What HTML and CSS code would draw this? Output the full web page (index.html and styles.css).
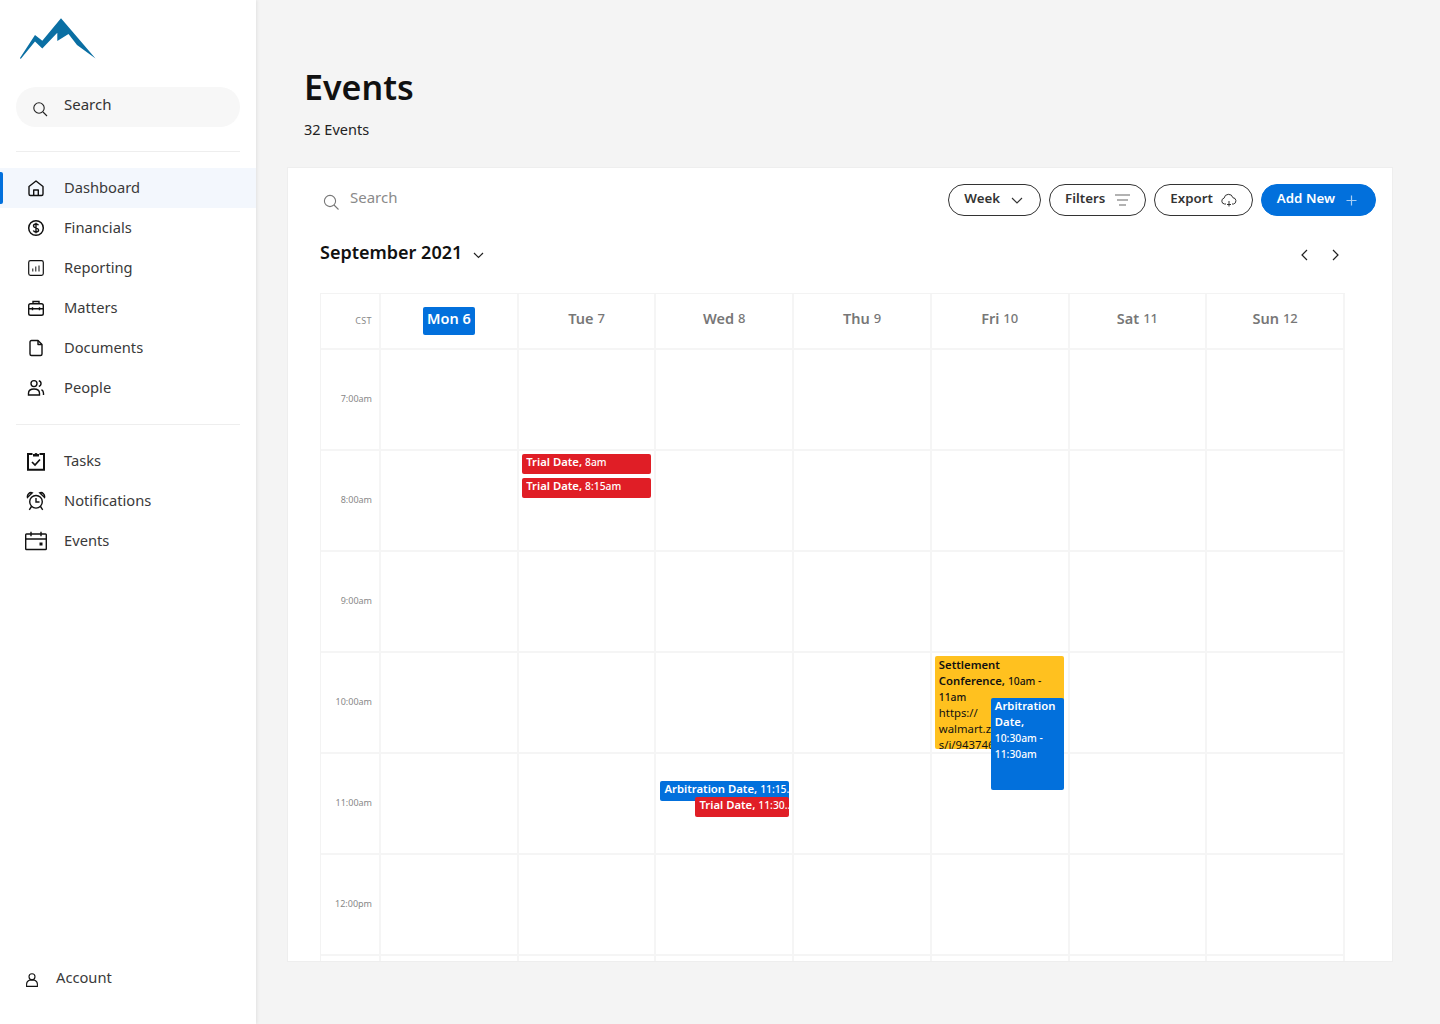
FILE: index.html
```html
<!DOCTYPE html>
<html lang="en">
<head>
  <meta charset="UTF-8">
  <title>Events</title>
  <link rel="stylesheet" href="styles.css">
</head>
<body>
  <aside class="sidebar">
    <svg class="logo" width="78" height="44" viewBox="0 0 78 44"><path fill="#0a6fa3" d="M0 40 L15 17 L22.300 22.700 L41 .3 L75.500 40.500 L57 27 L48.500 16 L37.300 23 L37.300 14.700 L22.300 30.500 L15 23.500 L.7 41 Z"/></svg>
    <div class="side-search">
      <svg width="16" height="16" viewBox="0 0 16 16" fill="none" stroke="#222" stroke-width="1.1"><circle cx="7" cy="7" r="5.200"/><path d="M11 11l4 4"/></svg>
      <span>Search</span>
    </div>
    <hr class="side-rule">
    <nav class="nav nav-main">
      <a class="nav-item active">
        <span class="nav-icon"><svg width="18" height="18" viewBox="0 0 18 18" fill="none" stroke="#111" stroke-width="1.4" stroke-linejoin="round"><path d="M2 7.500 9 2l7 5.500V15a1.500 1.500 0 0 1-1.500 1.500h-11A1.500 1.500 0 0 1 2 15Z"/><path d="M6.700 16.500V11h4.600v5.500"/></svg></span>
        Dashboard
      </a>
      <a class="nav-item">
        <span class="nav-icon"><svg width="18" height="18" viewBox="0 0 18 18" fill="none" stroke="#111" stroke-width="1.5"><circle cx="9" cy="9" r="7.300"/><path stroke-width="1.400" d="M11.500 6.300C11 5.300 10 5 9 5 7.600 5 6.500 5.700 6.500 6.900 6.500 9.300 11.600 8.300 11.600 11 11.600 12.300 10.400 13 9 13 7.800 13 6.800 12.500 6.300 11.500M9 3.800v10.400"/></svg></span>
        Financials
      </a>
      <a class="nav-item">
        <span class="nav-icon"><svg width="18" height="18" viewBox="0 0 18 18" fill="none" stroke="#111" stroke-width="1.200"><rect x="1.700" y="1.700" width="14.600" height="14.600" rx="1.800"/><path stroke-width="1" d="M5.800 9.500v3M8.800 7.500v5M12 6.500v6"/></svg></span>
        Reporting
      </a>
      <a class="nav-item">
        <span class="nav-icon"><svg width="18" height="18" viewBox="0 0 18 18" fill="none" stroke="#111" stroke-width="1.400"><rect x="1.700" y="4.700" width="14.600" height="11.600" rx="1.800"/><path d="M6 4.700V2.500h6v2.200M1.700 9.800h14.600M5.500 8.300v3M12.500 8.300v3"/></svg></span>
        Matters
      </a>
      <a class="nav-item">
        <span class="nav-icon"><svg width="18" height="18" viewBox="0 0 18 18" fill="none" stroke="#111" stroke-width="1.400" stroke-linejoin="round"><path d="M3 3a1.500 1.500 0 0 1 1.500-1.500H11l4 4V15a1.500 1.500 0 0 1-1.500 1.500h-9A1.500 1.500 0 0 1 3 15Z"/><path d="M11 1.500V5.500h4"/></svg></span>
        Documents
      </a>
      <a class="nav-item">
        <span class="nav-icon"><svg width="18" height="18" viewBox="0 0 18 18" fill="none" stroke="#111" stroke-width="1.400"><circle cx="7" cy="4.600" r="3"/><path d="M1.500 16v-1.800C1.500 11.800 3.600 10 7 10s5.500 1.800 5.500 4.200V16ZM11.800 1.700a3 3 0 0 1 0 5.800M14.500 10.700c1.300.8 2 2 2 3.500V16"/></svg></span>
        People
      </a>
    </nav>
    <hr class="side-rule rule-lower">
    <nav class="nav">
      <a class="nav-item">
        <span class="nav-icon"><svg width="20" height="20" viewBox="0 0 20 20" fill="none" stroke="#111" stroke-width="2"><path d="M6.500 3H2v15.800h16V3h-4.500"/><path fill="#111" stroke="none" d="M7 3h1.500a1.600 1.600 0 0 1 3 0H13v2.500H7Z"/><path stroke-width="1.700" d="m6 11 3 3 5-5.500"/></svg></span>
        Tasks
      </a>
      <a class="nav-item">
        <span class="nav-icon"><svg width="20" height="20" viewBox="0 0 20 20" fill="none" stroke="#111" stroke-width="1.400"><circle cx="10" cy="10.800" r="6.300"/><path d="M10 7v4h3.500M1.500 6.500C.8 3.500 3.500.8 6.300 1.800ZM18.500 6.500c.7-3-2-5.700-4.800-4.700ZM5.500 15.500 3.300 18.800M14.500 15.500l2.200 3.300"/></svg></span>
        Notifications
      </a>
      <a class="nav-item">
        <span class="nav-icon"><svg width="22" height="20" viewBox="0 0 22 20" fill="none" stroke="#111" stroke-width="1.400"><rect x=".700" y="3" width="20.600" height="15.500" rx=".8"/><path d="M.700 8h20.600M6 .8v4.500M16 .8v4.500"/><rect x="14.500" y="11.500" width="3" height="3" fill="#111" stroke="none"/></svg></span>
        Events
      </a>
    </nav>
    <a class="account">
      <svg width="12" height="14" viewBox="0 0 12 14" fill="none" stroke="#111" stroke-width="1.100"><circle cx="6" cy="3.800" r="3"/><path d="M.6 13.400v-2.300C.6 9 2.400 7.600 3.800 7.100h4.400c1.400.5 3.200 1.900 3.200 4v2.300Z"/></svg>
      Account
    </a>
  </aside>

  <main class="main">
    <header class="page-head">
      <h1>Events</h1>
      <p>32 Events</p>
    </header>

    <section class="card">
      <div class="toolbar">
        <div class="card-search">
          <svg width="16" height="16" viewBox="0 0 16 16" fill="none" stroke="#777" stroke-width="1.100"><circle cx="7" cy="7" r="5.600"/><path d="M11 11l4.500 4.500"/></svg>
          <span>Search</span>
        </div>
        <div class="actions">
          <button class="btn btn-week">Week <svg width="12" height="7" viewBox="0 0 12 7" fill="none" stroke="#333" stroke-width="1.100"><path d="m1 1 5 5 5-5"/></svg></button>
          <button class="btn btn-filters">Filters <svg width="15" height="12" viewBox="0 0 15 12" fill="none" stroke="#666" stroke-width="1.200"><path d="M0 1h15M2 6h11M4 11h7"/></svg></button>
          <button class="btn btn-export">Export <svg width="16" height="14" viewBox="0 0 16 14" fill="none" stroke="#333" stroke-width="1"><path d="M5 11H3.500a3 3 0 0 1-.4-5.900 4.500 4.500 0 0 1 8.800-.4 3.200 3.200 0 0 1 .6 6.300H11M8 8v5.500M6 11.500h4"/></svg></button>
          <button class="btn btn-primary">Add New <svg width="11" height="11" viewBox="0 0 11 11" fill="none" stroke="#a9cff5" stroke-width="1.200"><path d="M5.500 .5v10M.5 5.500h10"/></svg></button>
        </div>
      </div>

      <div class="month-bar">
        <h2>September 2021</h2>
        <svg class="month-caret" width="11" height="7" viewBox="0 0 11 7" fill="none" stroke="#222" stroke-width="1.200"><path d="m1 1 4.500 4.500L10 1"/></svg>
        <div class="pager">
          <svg width="8" height="12" viewBox="0 0 8 12" fill="none" stroke="#222" stroke-width="1.200"><path d="M7 1 2 6l5 5"/></svg>
          <svg width="8" height="12" viewBox="0 0 8 12" fill="none" stroke="#222" stroke-width="1.200"><path d="m1 1 5 5-5 5"/></svg>
        </div>
      </div>

      <div class="calendar">
        <div class="cell head time">CST</div>
        <div class="cell head"><span class="today">Mon 6</span></div>
        <div class="cell head">Tue <small>7</small></div>
        <div class="cell head">Wed <small>8</small></div>
        <div class="cell head">Thu <small>9</small></div>
        <div class="cell head">Fri <small>10</small></div>
        <div class="cell head">Sat <small>11</small></div>
        <div class="cell head">Sun <small>12</small></div>

        <div class="cell time">7:00am</div>
        <div class="cell"></div><div class="cell"></div><div class="cell"></div><div class="cell"></div><div class="cell"></div><div class="cell"></div><div class="cell"></div>

        <div class="cell time">8:00am</div>
        <div class="cell"></div>
        <div class="cell">
          <div class="event red trial-a">Trial Date, <small>8am</small></div>
          <div class="event red trial-b">Trial Date, <small>8:15am</small></div>
        </div>
        <div class="cell"></div><div class="cell"></div><div class="cell"></div><div class="cell"></div><div class="cell"></div>

        <div class="cell time">9:00am</div>
        <div class="cell"></div><div class="cell"></div><div class="cell"></div><div class="cell"></div><div class="cell"></div><div class="cell"></div><div class="cell"></div>

        <div class="cell time">10:00am</div>
        <div class="cell"></div><div class="cell"></div><div class="cell"></div><div class="cell"></div>
        <div class="cell">
          <div class="event amber settlement">Settlement Conference, <small>10am - 11am</small><br><span class="plain">https://<br>walmart.zoom.u<br>s/i/943746</span></div>
          <div class="event blue arbitration">Arbitration Date,<br><small>10:30am - 11:30am</small></div>
        </div>
        <div class="cell"></div><div class="cell"></div>

        <div class="cell time">11:00am</div>
        <div class="cell"></div><div class="cell"></div>
        <div class="cell">
          <div class="event blue arb-short">Arbitration Date, <small>11:15…</small></div>
          <div class="event red trial-short">Trial Date, <small>11:30…</small></div>
        </div>
        <div class="cell"></div><div class="cell"></div><div class="cell"></div><div class="cell"></div>

        <div class="cell time">12:00pm</div>
        <div class="cell"></div><div class="cell"></div><div class="cell"></div><div class="cell"></div><div class="cell"></div><div class="cell"></div><div class="cell"></div>

        <div class="cell time"></div>
        <div class="cell"></div><div class="cell"></div><div class="cell"></div><div class="cell"></div><div class="cell"></div><div class="cell"></div><div class="cell"></div>
      </div>
    </section>
  </main>
</body>
</html>
```

FILE: styles.css
```css
* {
  box-sizing: border-box;
}
body {
  margin: 0;
  height: 1024px;
  display: flex;
  overflow: hidden;
  font-family: "Noto Sans", sans-serif;
  background: #f4f4f4;
  color: #333;
}

/* sidebar */
.sidebar {
  width: 256px;
  flex: none;
  height: 1024px;
  background: #fff;
  box-shadow: 1px 0 3px rgba(0,0,0,0.08);
  padding-top: 18px;
  display: flex;
  flex-direction: column;
  position: relative;
}
.logo {
  margin-left: 20px;
  display: block;
}
.side-search {
  margin: 25px 16px 0;
  height: 40px;
  border-radius: 20px;
  background: #f7f7f7;
  display: flex;
  align-items: center;
  padding-left: 16px;
  gap: 16px;
  font-size: 15px;
}
.side-search svg {
  margin-top: 3px;
}
.side-search span {
  margin-top: -7px;
}
.side-rule {
  width: 224px;
  margin: 24px 16px 16px;
  border: 0;
  border-top: 1px solid #eee;
}
.rule-lower {
  margin: 16px 16px 16px;
}
.nav {
  display: flex;
  flex-direction: column;
}
.nav-item {
  height: 40px;
  display: flex;
  align-items: center;
  padding-bottom: 3px;
  font-size: 14.700px;
  color: #3a3a3a;
  position: relative;
}
.nav-item.active {
  background: #f3f7fd;
}
.nav-item.active::before {
  content: "";
  position: absolute;
  left: 0;
  top: 4px;
  width: 3px;
  height: 32px;
  background: #0270dc;
  border-radius: 0 2px 2px 0;
}
.nav-icon {
  width: 64px;
  padding-left: 16px;
  padding-right: 8px;
  margin-top: 3px;
  flex: none;
  display: flex;
  justify-content: center;
}
.nav-icon svg {
  display: block;
}
.account {
  margin-top: auto;
  margin-bottom: 37px;
  margin-left: 26px;
  display: flex;
  align-items: center;
  gap: 18px;
  font-size: 14.700px;
  color: #3a3a3a;
}
.account svg {
  margin-top: 6px;
}

/* main */
.main {
  flex: 1;
  padding: 0 48px 0 32px;
}
.page-head {
  height: 168px;
  padding: 64px 0 0 16px;
}
.page-head h1 {
  margin: 0;
  font-size: 34px;
  line-height: 46px;
  font-weight: 600;
  color: #111;
}
.page-head p {
  margin: 9px 0 0;
  font-size: 14.500px;
  line-height: 20px;
  color: #222;
}
.card {
  height: 793px;
  background: #fff;
  box-shadow: 0 0 0 1px #eee;
  overflow: hidden;
  padding-top: 16px;
}
.toolbar {
  display: flex;
  justify-content: space-between;
  padding: 0 16px 0 35px;
}
.card-search {
  display: flex;
  align-items: center;
  gap: 11px;
  font-size: 15px;
  color: #8a8a8a;
}
.card-search svg {
  margin-top: 3px;
}
.card-search span {
  margin-top: -7px;
}
.actions {
  display: flex;
  gap: 8px;
}
.btn {
  height: 32px;
  display: flex;
  align-items: center;
  gap: 9px;
  padding: 0 15px 5px;
  border: 1px solid #333;
  border-radius: 16px;
  background: #fff;
  font-family: inherit;
  font-size: 13.300px;
  font-weight: 600;
  color: #333;
}
.btn svg {
  margin-top: 5px;
}
.btn-week {
  gap: 11px;
  padding-right: 17px;
}
.btn-filters {
  gap: 10px;
}
.btn-export {
  gap: 8px;
}
.btn-primary {
  gap: 11px;
  padding-right: 18px;
  background: #0270dc;
  border-color: #0270dc;
  color: #fff;
}
.month-bar {
  display: flex;
  align-items: center;
  gap: 11px;
  height: 32px;
  margin-top: 21px;
  padding-left: 32px;
}
.month-bar h2 {
  margin: 0 0 2px;
  font-size: 18px;
  font-weight: 600;
  color: #111;
}
.month-caret {
  margin-top: 4px;
}
.pager {
  margin-left: auto;
  margin-right: 52px;
  margin-top: 4px;
  display: flex;
  gap: 24px;
}

/* calendar grid */
.calendar {
  margin: 24px 0 0 32px;
  width: 1025px;
  display: grid;
  grid-template-columns: 60px repeat(7, 1fr);
  grid-template-rows: 56px repeat(7, 101px);
  border-top: 1px solid #f3f3f3;
  border-left: 1px solid #f3f3f3;
}
.cell {
  position: relative;
  border-right: 2px solid #f5f5f5;
  border-bottom: 2px solid #f5f5f5;
}
.head {
  display: flex;
  align-items: center;
  justify-content: center;
  font-size: 14.500px;
  font-weight: 600;
  color: #777;
  gap: 4px;
  padding-bottom: 6px;
}
.head small {
  font-size: 13px;
  font-weight: 500;
}
.today {
  background: #0270dc;
  color: #fff;
  border-radius: 2px;
  width: 52px;
  height: 28px;
  display: flex;
  align-items: center;
  justify-content: center;
  padding-bottom: 6px;
  margin-top: 6px;
  font-weight: 600;
}
.time {
  display: flex;
  align-items: center;
  justify-content: flex-end;
  padding: 0 7px 2px 0;
  font-size: 9px;
  font-weight: 400;
  color: #888;
}
.head.time {
  letter-spacing: 0.400px;
}

/* events */
.event {
  position: absolute;
  padding: 0 4px;
  border-radius: 2px;
  font-size: 11.300px;
  font-weight: 600;
  line-height: 16px;
  overflow: hidden;
  color: #fff;
}
.event small {
  font-size: 10.300px;
  font-weight: 500;
}
.plain {
  font-weight: 400;
}
.red {
  background: #e01e26;
}
.blue {
  background: #0270dc;
}
.amber {
  background: #ffc11f;
  color: #111;
}
.trial-a,
.trial-b {
  left: 3.500px;
  right: 3px;
  height: 20px;
}
.trial-a {
  top: 3px;
}
.trial-b {
  top: 27px;
}
.settlement {
  left: 3px;
  right: 4px;
  top: 3px;
  height: 93px;
  padding-top: 1px;
}
.arbitration {
  left: 59px;
  right: 4px;
  top: 45px;
  height: 92px;
  z-index: 1;
}
.arb-short,
.trial-short {
  height: 20px;
  right: 3px;
  padding-right: 0;
  white-space: nowrap;
}
.arb-short {
  left: 4px;
  top: 27px;
}
.trial-short {
  left: 39px;
  top: 43px;
  z-index: 1;
}
```
